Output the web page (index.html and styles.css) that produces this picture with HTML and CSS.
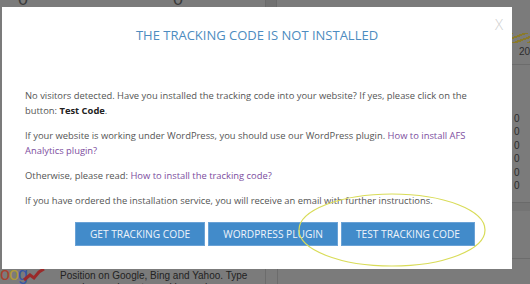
FILE: index.html
```html
<!DOCTYPE html>
<html>
<head>
<meta charset="utf-8">
<link rel="stylesheet" href="styles.css">
</head>
<body>
<div class="page">
  <div class="top-row">
    <span class="big-digit d1">0</span>
    <span class="big-digit d2">0</span>
    <span class="vdiv"></span>
  </div>
  <div class="mid-row">
    <div class="left-area"></div>
    <div class="right-col">
      <div class="stripes"></div>
      <div class="year">20</div>
      <div class="rule"></div>
      <ul class="zeros">
        <li>0</li><li>0</li><li>0</li><li>0</li><li>0</li><li>0</li>
      </ul>
      <div class="rule band"></div>
      <div class="rule low"></div>
    </div>
  </div>
  <div class="bottom-row">
    <div class="glogo">
      <span class="g-o1">o</span><span class="g-o2">o</span><span class="g-g">g</span>
      <svg class="swoosh" width="22" height="14" viewBox="0 0 22 14"><polyline points="1,12 7,7 11,10 16,4 21,1" fill="none" stroke="#9a2a2a" stroke-width="3"/></svg>
    </div>
    <div class="promo">Position on Google, Bing and Yahoo. Type<br>your keywords, get a ranking and</div>
    <span class="vdiv2"></span>
  </div>
</div>

<div class="modal">
  <span class="close">X</span>
  <h1 class="title">THE TRACKING CODE IS NOT INSTALLED</h1>
  <div class="body">
    <p>No visitors detected. Have you installed the tracking code into your website? If yes, please click on the button: <b>Test Code</b>.</p>
    <p>If your website is working under WordPress, you should use our WordPress plugin. <a href="#">How to install AFS Analytics plugin?</a></p>
    <p>Otherwise, please read: <a href="#">How to install the tracking code?</a></p>
    <p>If you have ordered the installation service, you will receive an email with further instructions.</p>
  </div>
  <div class="footer">
    <button class="btn">GET TRACKING CODE</button>
    <button class="btn">WORDPRESS PLUGIN</button>
    <button class="btn">TEST TRACKING CODE</button>
  </div>
</div>

<svg class="ellipse" width="200" height="80" viewBox="0 0 200 80">
  <ellipse cx="98" cy="37" rx="93" ry="36" fill="none" stroke="#d9dc58" stroke-width="1.2"/>
</svg>
</body>
</html>
```

FILE: styles.css
```css
* { box-sizing: border-box; }
html, body { margin: 0; padding: 0; }
body {
  width: 530px;
  height: 284px;
  overflow: hidden;
  background: #7b7b7b;
  font-family: "Open Sans", "Noto Sans", sans-serif;
  position: relative;
}

/* dimmed page behind the overlay */
.page {
  display: flex;
  flex-direction: column;
  height: 284px;
}
.top-row {
  height: 7px;
  position: relative;
  overflow: hidden;
}
.big-digit {
  position: absolute;
  top: -11px;
  font-size: 18px;
  color: #3a3a3a;
  font-family: "Liberation Sans", sans-serif;
}
.d1 { left: 18px; }
.d2 { left: 173px; }
.vdiv {
  position: absolute;
  left: 265px;
  top: 0;
  width: 12px;
  height: 7px;
  background: #717171;
  border-left: 1px solid #6a6a6a;
  border-right: 1px solid #6a6a6a;
}
.mid-row {
  flex: 1;
  display: flex;
}
.left-area { width: 505px; }
.right-col {
  flex: 1;
  padding-top: 26px;
}
.stripes {
  height: 10px;
  background: repeating-linear-gradient(160deg, #7b7b7b 0 3px, #8a7a2a 3px 5px);
}
.year {
  font-size: 10px;
  color: #2c2c2c;
  padding-left: 19px;
  line-height: 12px;
  margin-top: 3px;
  font-family: "Liberation Sans", sans-serif;
}
.rule {
  height: 1px;
  background: #6c6c6c;
  margin-top: 6px;
}
.zeros {
  list-style: none;
  margin: 47px 0 0;
  padding: 0 0 0 14px;
  font-size: 10px;
  line-height: 13.4px;
  color: #2c2c2c;
  font-family: "Liberation Sans", sans-serif;
}
.rule.band {
  height: 9px;
  margin-top: 10px;
  background: #747474;
  border-top: 1px solid #6a6a6a;
}
.rule.low { margin-top: 47px; }

.bottom-row {
  height: 15px;
  display: flex;
  gap: 15px;
  position: relative;
  overflow: visible;
}
.glogo {
  width: 45px;
  position: relative;
  font-family: "Liberation Sans", sans-serif;
  font-size: 18px;
  line-height: 15px;
  margin-top: -2px;
  letter-spacing: -1px;
  white-space: nowrap;
}
.g-o1 { color: #a8402e; }
.g-o2 { color: #b09a3a; }
.g-g { color: #3656a4; }
.swoosh { position: absolute; left: 23px; top: 1px; }
.promo {
  font-family: "Liberation Sans", sans-serif;
  font-size: 10px;
  line-height: 12px;
  color: #222;
  padding-top: 1px;
  white-space: nowrap;
}
.vdiv2 {
  position: absolute;
  left: 265px;
  top: 0;
  width: 13px;
  height: 15px;
  border-left: 1px solid #6c6c6c;
  border-right: 1px solid #6c6c6c;
}

/* modal */
.modal {
  position: absolute;
  left: 2px;
  top: 7px;
  width: 510px;
  height: 262px;
  background: #fff;
  padding: 18px 0 0;
}
.close {
  position: absolute;
  right: 9px;
  top: 8px;
  font-size: 15px;
  line-height: 18px;
  font-weight: 300;
  color: #cfcfcf;
}
.title {
  margin: 0;
  text-align: center;
  font-weight: 400;
  font-size: 13px;
  line-height: 20px;
  color: #4d8cc0;
}
.body {
  padding: 43px 20px 0 23px;
  font-size: 9.4px;
  line-height: 15px;
  color: #555;
}
.body p { margin: 0 0 10px; }
.body b { color: #222; font-weight: 700; }
.body a { color: #7d4ea0; text-decoration: none; }
.footer {
  display: flex;
  justify-content: flex-end;
  gap: 3px;
  padding: 4px 37px 0 0;
}
.btn {
  height: 24px;
  padding: 0 14px;
  border: 1px solid #6aa2d6;
  background: #428bca;
  color: #eef4fa;
  font-family: "Open Sans", "Noto Sans", sans-serif;
  font-size: 10.2px;
  line-height: 22px;
}

.ellipse {
  position: absolute;
  left: 294px;
  top: 193px;
}
```
